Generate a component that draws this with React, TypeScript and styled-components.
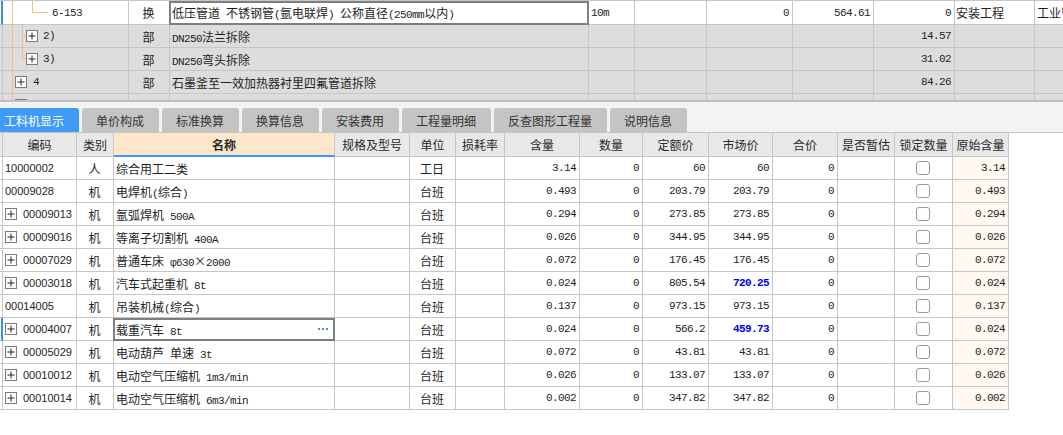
import React from 'react';
import styled, { createGlobalStyle } from 'styled-components';

const GRID = '#c6c6c6';
const TREE = '#f5c07a';

const GlobalStyle = createGlobalStyle`
  *, *::before, *::after { box-sizing: border-box; }
  html, body { margin: 0; padding: 0; background: #fff; }
  body {
    font-family: "Noto Sans CJK SC", "Liberation Sans", sans-serif;
    font-size: 12px;
    color: #1e1e1e;
  }
`;

const Page = styled.div`
  width: 1063px;
  height: 435px;
  overflow: hidden;
  background: #fff;
  display: flex;
  flex-direction: column;
`;

/* ---------- upper grid ---------- */
const TopGrid = styled.div`
  flex: none;
  height: 102px;
  overflow: hidden;
  border-top: 1px solid ${GRID};
  border-bottom: 2px solid #c0c0c0;
  background: #dddddd;
`;

const TopRow = styled.div<{ $white?: boolean }>`
  display: flex;
  height: 23px;
  width: max-content;
  background: ${(p) => (p.$white ? '#ffffff' : '#dddddd')};
  &:first-child {
    height: 24px;
  }
`;

const Gutter = styled.div<{ $mark?: boolean; $bg?: string }>`
  flex: none;
  width: 3px;
  background: ${(p) => p.$bg ?? 'transparent'};
  border-right: ${(p) => (p.$mark ? '2px solid #3a8ee6' : `1px solid ${GRID}`)};
  border-bottom: 1px solid ${GRID};
`;

type Align = 'left' | 'center' | 'right';

const Cell = styled.div<{ $w: number; $align?: Align; $bg?: string; $pl?: number; $sel?: boolean }>`
  position: relative;
  flex: none;
  width: ${(p) => p.$w}px;
  display: flex;
  align-items: center;
  justify-content: ${(p) =>
    p.$align === 'center' ? 'center' : p.$align === 'right' ? 'flex-end' : 'flex-start'};
  padding: 0 3px 0 ${(p) => p.$pl ?? 2}px;
  border-right: 1px solid ${GRID};
  border-bottom: 1px solid ${GRID};
  background: ${(p) => p.$bg ?? 'transparent'};
  white-space: nowrap;
  overflow: ${(p) => (p.$sel ? 'visible' : 'hidden')};
  &::after {
    content: '';
    display: ${(p) => (p.$sel ? 'block' : 'none')};
    position: absolute;
    left: -1px;
    top: 0;
    right: -1px;
    bottom: -1px;
    border: 2px solid #7f7f7f;
    pointer-events: none;
    z-index: 1;
  }
`;

const Txt = styled.span`
  white-space: pre;
`;

const Latin = styled.span<{ $blue?: boolean }>`
  font-family: "Liberation Mono", "DejaVu Sans Mono", monospace;
  font-size: 11px;
  letter-spacing: -0.6px;
  color: ${(p) => (p.$blue ? '#0000ee' : 'inherit')};
  font-weight: ${(p) => (p.$blue ? 700 : 400)};
`;

const CodeText = styled.span`
  font-family: "Liberation Sans", "Noto Sans", sans-serif;
  font-size: 11px;
`;

const TreeSvg = styled.svg`
  flex: none;
  align-self: flex-start;
  overflow: visible;
`;

const Dots = styled.svg`
  flex: none;
  margin-left: auto;
  margin-right: 3px;
`;

const PlusSvg = styled.svg`
  flex: none;
  margin-right: 6px;
`;

const Check = styled.span`
  width: 14px;
  height: 14px;
  border: 1px solid #9c9c9c;
  border-radius: 3px;
  background: #fff;
`;

const LATIN_RE = /([\x00-\x7Fφ]+)/;

function Mixed({ text }: { text: string }) {
  const parts = text.split(LATIN_RE).filter(Boolean);
  return (
    <Txt>
      {parts.map((p, i) =>
        /^[\x00-\x7Fφ]+$/.test(p) ? <Latin key={i}>{p}</Latin> : <span key={i}>{p}</span>
      )}
    </Txt>
  );
}

function BoxInSvg({ x, y }: { x: number; y: number }) {
  return (
    <g transform={`translate(${x} ${y})`}>
      <rect x={0.5} y={0.5} width={11} height={11} fill="#fff" stroke="#7b7b7b" />
      <path d="M2.5 6h7M6 2.5v7" stroke="#222" strokeWidth={1} />
    </g>
  );
}

function PlusBox() {
  return (
    <PlusSvg width={12} height={12} viewBox="0 0 12 12">
      <rect x={0.5} y={0.5} width={11} height={11} fill="#fff" stroke="#7b7b7b" />
      <path d="M2.5 6h7M6 2.5v7" stroke="#222" strokeWidth={1} />
    </PlusSvg>
  );
}

type TreeKind = 'leaf' | 'mid' | 'last' | 'top';

function TreeGlyph({ kind }: { kind: TreeKind }) {
  const stroke = { stroke: TREE, strokeWidth: 1, fill: 'none' };
  if (kind === 'leaf') {
    return (
      <TreeSvg width={49} height={22}>
        <path d="M9.5 -4V30" {...stroke} />
        <path d="M29.5 -4V11.5H45" {...stroke} />
      </TreeSvg>
    );
  }
  if (kind === 'mid' || kind === 'last') {
    return (
      <TreeSvg width={40} height={22}>
        <path d="M9.5 -4V30" {...stroke} />
        <path d={kind === 'mid' ? 'M19.5 -4V30' : 'M19.5 -4V10.5'} {...stroke} />
        <path d="M19.5 10.5H23" {...stroke} />
        <BoxInSvg x={23} y={5} />
      </TreeSvg>
    );
  }
  return (
    <TreeSvg width={30} height={22}>
      <path d="M9.5 -4V30" {...stroke} />
      <path d="M9.5 10.5H12" {...stroke} />
      <BoxInSvg x={12} y={5} />
    </TreeSvg>
  );
}

const TOP_W = [126, 41, 419, 46, 72, 86, 81, 81, 80, 80];

type TopData = {
  tree: TreeKind;
  code: string;
  type: string;
  name: string;
  unit?: string;
  c6?: string;
  c7?: string;
  c8?: string;
  c9?: string;
  c10?: string;
  white?: boolean;
};

const TOP_ROWS: TopData[] = [
  {
    tree: 'leaf',
    code: '6-153',
    type: '换',
    name: '低压管道 不锈钢管(氩电联焊) 公称直径(250mm以内)',
    unit: '10m',
    c6: '0',
    c7: '564.61',
    c8: '0',
    c9: '安装工程',
    c10: '工业管道',
    white: true,
  },
  { tree: 'mid', code: '2)', type: '部', name: 'DN250法兰拆除', c8: '14.57' },
  { tree: 'last', code: '3)', type: '部', name: 'DN250弯头拆除', c8: '31.02' },
  { tree: 'top', code: '4', type: '部', name: '石墨釜至一效加热器衬里四氟管道拆除', c8: '84.26' },
  { tree: 'top', code: '5', type: '部', name: '石墨冷却器至二效加热器衬里管道安装', c8: '96.40' },
];

/* ---------- tabs ---------- */
const TabBar = styled.div`
  flex: none;
  height: 30px;
  padding-top: 6px;
  background: #f3f3f3;
  display: flex;
  align-items: flex-end;
  gap: 3px;
  overflow: hidden;
`;

const Tab = styled.div<{ $active?: boolean }>`
  flex: none;
  height: 24px;
  padding: 0 14.5px;
  display: flex;
  align-items: center;
  justify-content: center;
  font-size: 12px;
  border-radius: 3px 3px 0 0;
  background: ${(p) => (p.$active ? '#3e9cf6' : '#c4c4c4')};
  color: ${(p) => (p.$active ? '#ffffff' : '#333333')};
  &:first-child {
    padding-left: 4px;
    border-top-left-radius: 0;
  }
`;

const TABS = ['工料机显示', '单价构成', '标准换算', '换算信息', '安装费用', '工程量明细', '反查图形工程量', '说明信息'];

/* ---------- lower table ---------- */
const Table = styled.div`
  flex: 1;
  border-top: 1px solid ${GRID};
`;

const HeadRow = styled.div`
  display: flex;
  height: 24px;
`;

const HeadCell = styled.div<{ $w: number; $active?: boolean }>`
  flex: none;
  width: ${(p) => p.$w}px;
  display: flex;
  align-items: center;
  justify-content: center;
  white-space: nowrap;
  overflow: hidden;
  font-size: 12px;
  color: #2a2a2a;
  font-weight: ${(p) => (p.$active ? 700 : 400)};
  background: ${(p) => (p.$active ? '#fde6ca' : '#e8e8e8')};
  border-right: 1px solid ${GRID};
  border-bottom: ${(p) => (p.$active ? '2px solid #3d9af5' : `1px solid ${GRID}`)};
`;

const DataRow = styled.div`
  display: flex;
  height: 23px;
`;

type Col = { title: string; w: number; active?: boolean };
const COLS: Col[] = [
  { title: '编码', w: 74 },
  { title: '类别', w: 37 },
  { title: '名称', w: 221, active: true },
  { title: '规格及型号', w: 75 },
  { title: '单位', w: 46 },
  { title: '损耗率', w: 49 },
  { title: '含量', w: 75 },
  { title: '数量', w: 63 },
  { title: '定额价', w: 66 },
  { title: '市场价', w: 64 },
  { title: '合价', w: 65 },
  { title: '是否暂估', w: 57 },
  { title: '锁定数量', w: 58 },
  { title: '原始含量', w: 56 },
];

type Item = {
  code: string;
  exp?: boolean;
  type: string;
  name: string;
  unit: string;
  qty: string;
  quota: string;
  market: string;
  blue?: boolean;
};

const ITEMS: Item[] = [
  { code: '10000002', type: '人', name: '综合用工二类', unit: '工日', qty: '3.14', quota: '60', market: '60' },
  { code: '00009028', type: '机', name: '电焊机(综合)', unit: '台班', qty: '0.493', quota: '203.79', market: '203.79' },
  { code: '00009013', exp: true, type: '机', name: '氩弧焊机 500A', unit: '台班', qty: '0.294', quota: '273.85', market: '273.85' },
  { code: '00009016', exp: true, type: '机', name: '等离子切割机 400A', unit: '台班', qty: '0.026', quota: '344.95', market: '344.95' },
  { code: '00007029', exp: true, type: '机', name: '普通车床 φ630×2000', unit: '台班', qty: '0.072', quota: '176.45', market: '176.45' },
  { code: '00003018', exp: true, type: '机', name: '汽车式起重机 8t', unit: '台班', qty: '0.024', quota: '805.54', market: '720.25', blue: true },
  { code: '00014005', type: '机', name: '吊装机械(综合)', unit: '台班', qty: '0.137', quota: '973.15', market: '973.15' },
  { code: '00004007', exp: true, type: '机', name: '载重汽车 8t', unit: '台班', qty: '0.024', quota: '566.2', market: '459.73', blue: true },
  { code: '00005029', exp: true, type: '机', name: '电动葫芦 单速 3t', unit: '台班', qty: '0.072', quota: '43.81', market: '43.81' },
  { code: '00010012', exp: true, type: '机', name: '电动空气压缩机 1m3/min', unit: '台班', qty: '0.026', quota: '133.07', market: '133.07' },
  { code: '00010014', exp: true, type: '机', name: '电动空气压缩机 6m3/min', unit: '台班', qty: '0.002', quota: '347.82', market: '347.82' },
];

const SELECTED = 7;

export default function App() {
  return (
    <>
      <GlobalStyle />
      <Page>
        <TopGrid>
          {TOP_ROWS.map((r, i) => (
            <TopRow key={i} $white={r.white}>
              <Gutter $mark={i === 0} />
              <Cell $w={TOP_W[0]} $pl={0}>
                <TreeGlyph kind={r.tree} />
                <Latin>{r.code}</Latin>
              </Cell>
              <Cell $w={TOP_W[1]} $align="center">{r.type}</Cell>
              <Cell $w={TOP_W[2]} $sel={i === 0}>
                <Mixed text={r.name} />
              </Cell>
              <Cell $w={TOP_W[3]}>{r.unit && <Latin>{r.unit}</Latin>}</Cell>
              <Cell $w={TOP_W[4]} />
              <Cell $w={TOP_W[5]} $align="right">{r.c6 && <Latin>{r.c6}</Latin>}</Cell>
              <Cell $w={TOP_W[6]} $align="right">{r.c7 && <Latin>{r.c7}</Latin>}</Cell>
              <Cell $w={TOP_W[7]} $align="right">{r.c8 && <Latin>{r.c8}</Latin>}</Cell>
              <Cell $w={TOP_W[8]} $pl={1}>{r.c9}</Cell>
              <Cell $w={TOP_W[9]}>{r.c10}</Cell>
            </TopRow>
          ))}
        </TopGrid>

        <TabBar>
          {TABS.map((t, i) => (
            <Tab key={t} $active={i === 0}>
              {t}
            </Tab>
          ))}
        </TabBar>

        <Table>
          <HeadRow>
            <Gutter $bg="#e8e8e8" />
            {COLS.map((c) => (
              <HeadCell key={c.title} $w={c.w} $active={c.active}>
                {c.title}
              </HeadCell>
            ))}
          </HeadRow>
          {ITEMS.map((it, i) => (
            <DataRow key={it.code}>
              <Gutter $mark={i === SELECTED} />
              <Cell $w={COLS[0].w}>
                {it.exp && <PlusBox />}
                <CodeText>{it.code}</CodeText>
              </Cell>
              <Cell $w={COLS[1].w} $align="center">{it.type}</Cell>
              <Cell $w={COLS[2].w} $sel={i === SELECTED}>
                <Mixed text={it.name} />
                {i === SELECTED && (
                  <Dots width={10} height={2} viewBox="0 0 10 2">
                    <rect x={0} y={0} width={2} height={2} fill="#4a90e2" />
                    <rect x={4} y={0} width={2} height={2} fill="#4a90e2" />
                    <rect x={8} y={0} width={2} height={2} fill="#4a90e2" />
                  </Dots>
                )}
              </Cell>
              <Cell $w={COLS[3].w} />
              <Cell $w={COLS[4].w} $align="center">{it.unit}</Cell>
              <Cell $w={COLS[5].w} />
              <Cell $w={COLS[6].w} $align="right"><Latin>{it.qty}</Latin></Cell>
              <Cell $w={COLS[7].w} $align="right"><Latin>0</Latin></Cell>
              <Cell $w={COLS[8].w} $align="right"><Latin>{it.quota}</Latin></Cell>
              <Cell $w={COLS[9].w} $align="right"><Latin $blue={it.blue}>{it.market}</Latin></Cell>
              <Cell $w={COLS[10].w} $align="right"><Latin>0</Latin></Cell>
              <Cell $w={COLS[11].w} />
              <Cell $w={COLS[12].w} $align="center"><Check /></Cell>
              <Cell $w={COLS[13].w} $align="right" $bg="#fff9f2"><Latin>{it.qty}</Latin></Cell>
            </DataRow>
          ))}
        </Table>
      </Page>
    </>
  );
}
